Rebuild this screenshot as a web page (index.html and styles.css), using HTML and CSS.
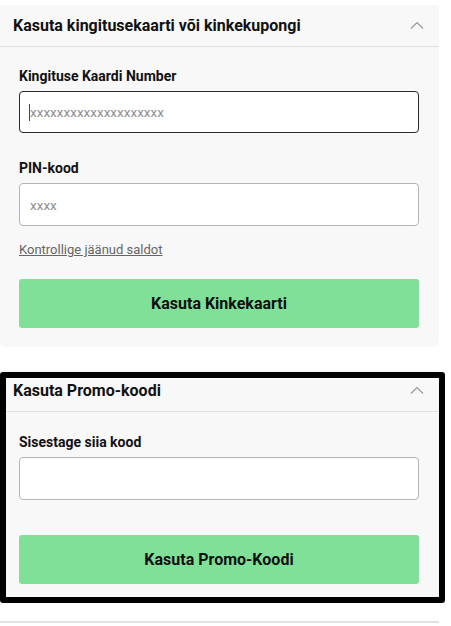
FILE: index.html
```html
<!DOCTYPE html>
<html lang="et">
<head>
<meta charset="utf-8">
<link rel="stylesheet" href="styles.css">
</head>
<body>
<div class="page">
  <section class="card card-gift">
    <div class="card-head">
      <h2 class="card-title">Kasuta kingitusekaarti või kinkekupongi</h2>
      <svg class="chev" width="14" height="8" viewBox="0 0 14 8"><path d="M1 7.5 L7 1.5 L13 7.5" fill="none" stroke="#9a9a9a" stroke-width="1.2"/></svg>
    </div>
    <div class="card-body">
      <label class="field-label">Kingituse Kaardi Number</label>
      <div class="input-wrap">
        <input class="field field-focus" type="text" placeholder="xxxxxxxxxxxxxxxxxxxx">
        <span class="caret"></span>
      </div>
      <label class="field-label label-pin">PIN-kood</label>
      <input class="field" type="text" placeholder="xxxx">
      <a class="balance-link" href="#">Kontrollige jäänud saldot</a>
      <button class="btn" type="button">Kasuta Kinkekaarti</button>
    </div>
  </section>

  <section class="card card-promo">
    <div class="card-head">
      <h2 class="card-title">Kasuta Promo-koodi</h2>
      <svg class="chev" width="14" height="8" viewBox="0 0 14 8"><path d="M1 7.5 L7 1.5 L13 7.5" fill="none" stroke="#9a9a9a" stroke-width="1.2"/></svg>
    </div>
    <div class="card-body">
      <label class="field-label">Sisestage siia kood</label>
      <input class="field" type="text">
      <button class="btn btn-promo" type="button">Kasuta Promo-Koodi</button>
    </div>
    <div class="highlight"></div>
  </section>

  <section class="card card-next"></section>
</div>
</body>
</html>
```

FILE: styles.css
```css
* { box-sizing: border-box; }
html, body { margin: 0; padding: 0; background: #fff; }
body {
  font-family: Roboto, "Noto Sans", Arial, sans-serif;
  color: #111;
  overflow: hidden;
}
.page {
  width: 439px;
  padding-top: 5px;
  display: flex;
  flex-direction: column;
}
.card {
  background: #f8f8f8;
  border-radius: 0 0 5px 5px;
  position: relative;
}
.card-promo { margin-top: 23px; }
.card-next {
  margin-top: 19px;
  height: 20px;
  border-top: 2px solid #e2e2e2;
  background: #fff;
}
.card-head {
  height: 42px;
  border-bottom: 1px solid #e0e0e0;
  display: flex;
  align-items: center;
  justify-content: space-between;
  padding: 0 15px 0 13px;
}
.card-title {
  margin: 0;
  font-size: 16px;
  font-weight: 700;
  color: #111;
}
.chev { display: block; margin-top: -1px; }
.card-body {
  padding: 21px 20px 19px 19px;
  display: flex;
  flex-direction: column;
}
.field-label {
  font-size: 14px;
  font-weight: 700;
  line-height: 16px;
  margin-bottom: 7px;
}
.label-pin { margin-top: 27px; }
.input-wrap { position: relative; }
.field {
  display: block;
  width: 100%;
  height: 43px;
  border: 1px solid #b5b5b5;
  border-radius: 4px;
  background: #fff;
  padding: 0 10px;
  font-family: Roboto, Arial, sans-serif;
  font-size: 13.5px;
  color: #111;
  outline: none;
}
.field::placeholder { color: #8f8f8f; }
.field-focus { height: 42px; border-color: #2b2b2b; }
.caret {
  position: absolute;
  left: 10px;
  top: 13px;
  width: 1px;
  height: 17px;
  background: #444;
}
.balance-link {
  margin-top: 16px;
  align-self: flex-start;
  font-size: 13px;
  line-height: 16px;
  color: #666;
  text-decoration: underline;
}
.btn {
  margin-top: 21px;
  height: 49px;
  width: 100%;
  border: none;
  border-radius: 3px;
  background: #80e097;
  font-family: Roboto, Arial, sans-serif;
  font-size: 16px;
  font-weight: 700;
  color: #111;
}
.btn-promo { margin-top: 35px; }
.card-promo .card-body { padding-top: 22px; padding-bottom: 18px; }
.highlight {
  position: absolute;
  left: 0;
  top: 2px;
  width: 445px;
  height: 231px;
  border: 6px solid #000;
  border-radius: 3px;
  pointer-events: none;
}
```
